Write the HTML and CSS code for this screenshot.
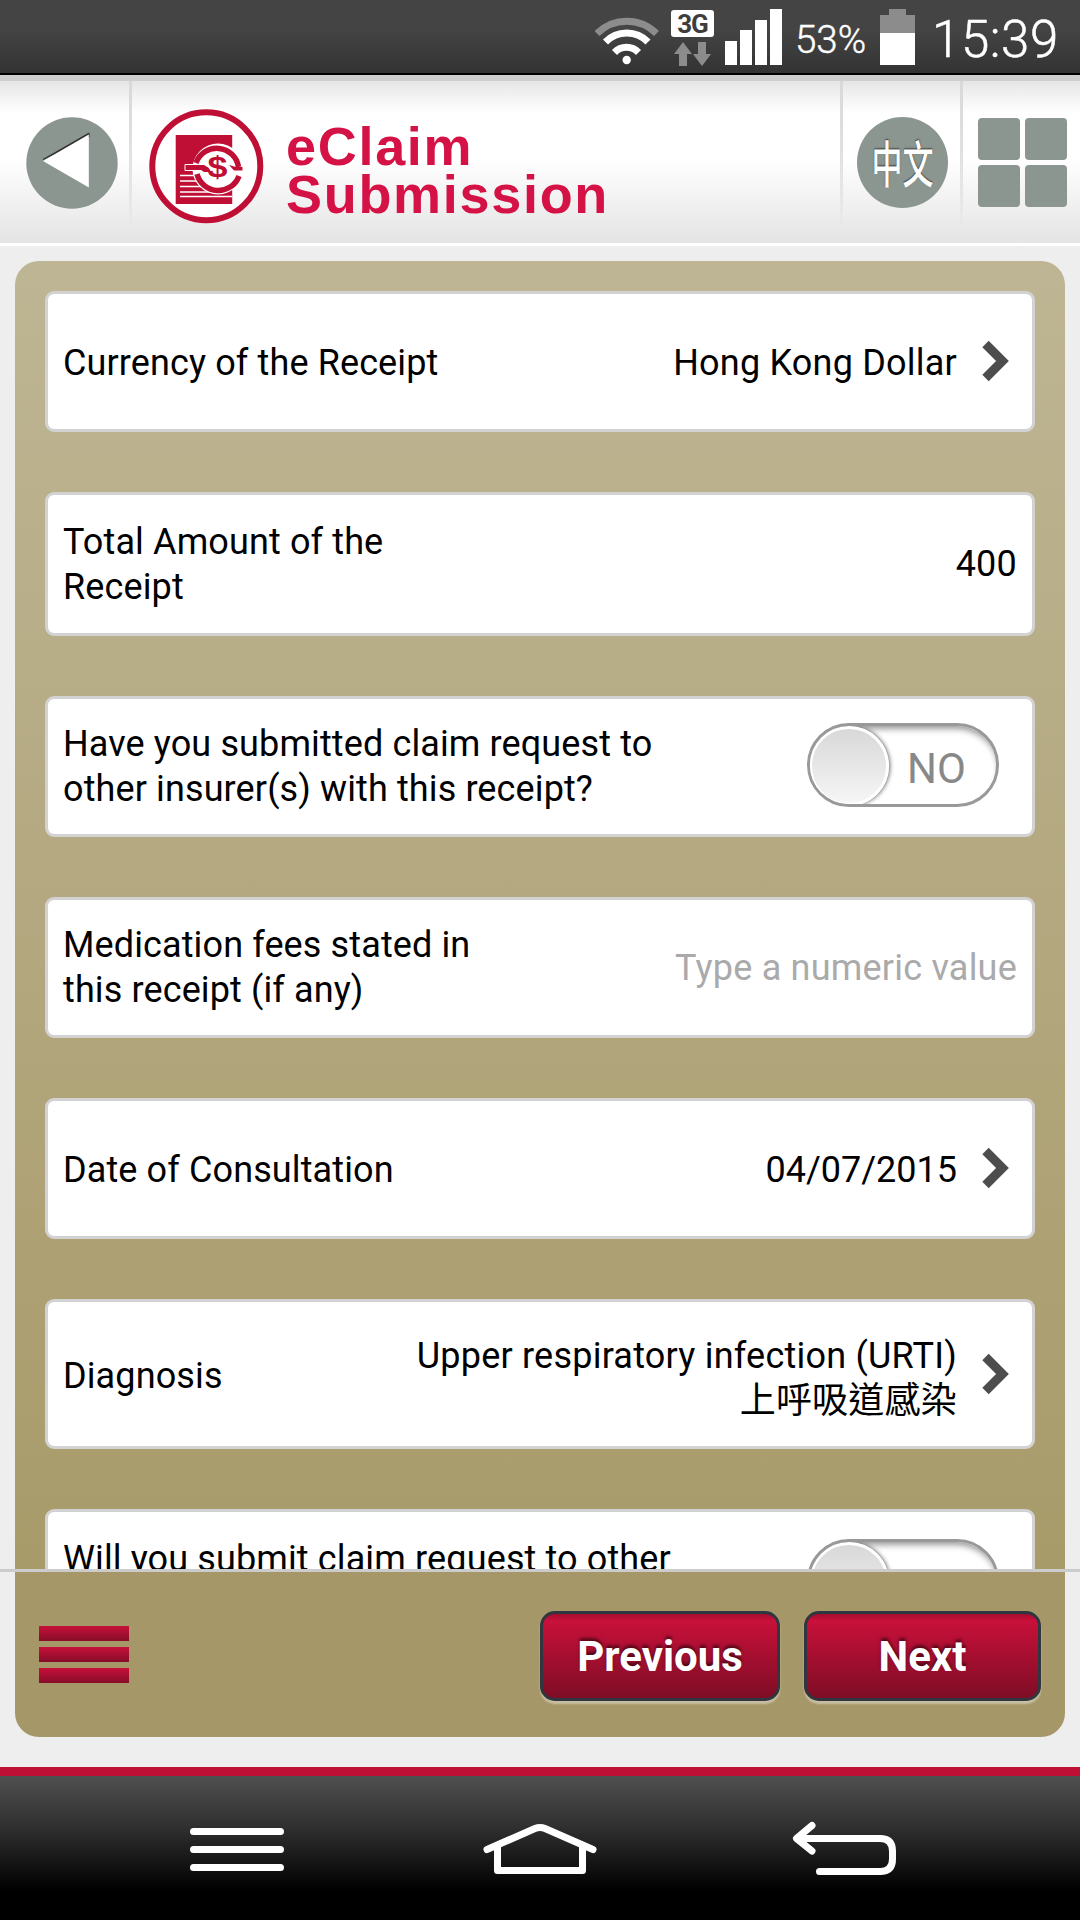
FILE: index.html
```html
<!DOCTYPE html>
<html lang="en">
<head>
    <meta charset="UTF-8">
    <meta name="viewport" content="width=device-width, initial-scale=1.0">
    <title>eClaim Submission</title>
    <link rel="stylesheet" href="styles.css">
</head>
<body>
    <div class="status-bar">
        <svg class="wifi" width="64" height="73" viewBox="595 0 64 73" fill="none" stroke="#fff" stroke-width="7">
            <path d="M597 33.5A42 42 0 0 1 656.500 33.500" stroke="#8c8c8c"/>
            <path d="M605.500 42A29.500 29.500 0 0 1 648 42"/>
            <path d="M614.500 52.500A16.500 16.500 0 0 1 638.500 52.500"/>
            <circle cx="626.700" cy="60" r="4.200" fill="#fff" stroke="none"/>
        </svg>
        <div class="network">
            <span class="network-type">3G</span>
            <svg width="43" height="24" viewBox="671 42 43 24" fill="#8c8c8c">
                <path d="M683 42l9 12h-5v12h-8v-12h-5zM698 42h8v12h5l-9 12-9-12h5z"/>
            </svg>
        </div>
        <svg class="signal" width="57" height="73" viewBox="725 0 57 73" fill="#fff">
            <path d="M725 41h12v24h-12zM740 30h12v35h-12zM755 20h12v45h-12zM770 9h12v56h-12z"/>
        </svg>
        <span class="percent">53%</span>
        <svg class="battery" width="35" height="73" viewBox="880 0 35 73">
            <path d="M889 9h17v6h9v18h-35V15h9z" fill="#8c8c8c"/>
            <path d="M880 33h35v32h-35z" fill="#fff"/>
        </svg>
        <span class="clock">15:39</span>
    </div>

    <header>
        <a class="back">
            <svg width="92" height="92" viewBox="0 0 92 92">
                <circle cx="46" cy="46" r="45.700" fill="#8b9691"/>
                <path d="M17 42.500L63 16v4z" fill="#333" stroke="#333"/>
                <path d="M17 44L62.800 17.500v53z" fill="#fff"/>
            </svg>
        </a>
        <div class="brand">
            <svg class="logo" width="116" height="116" viewBox="148 108 116 116">
                <circle cx="206.300" cy="166.200" r="54" fill="#fff" stroke="#bf0f35" stroke-width="6"/>
                <path d="M175.700 135h56.500v69h-56.500z" fill="#bf0f35"/>
                <path d="M180 175.500h20M180 181h22M180 186.500h25M180 192h30M180 196.500h52" stroke="#fff" stroke-width="1.700"/>
                <circle cx="218" cy="169" r="25.500" fill="#fff"/>
                <path d="M196 163A22 22 0 0 1 238.500 167M239 176A22 22 0 0 1 197 174" fill="none" stroke="#bf0f35" stroke-width="5.500"/>
                <path d="M185 164.500h19l5 3 3 5h-8l-3-2h-16z" fill="#bf0f35" stroke="#fff"/>
                <path d="M229 165l7 2h6.500v3.500h-8.500z" fill="#bf0f35"/>
                <text x="207.500" y="177" textLength="20" lengthAdjust="spacingAndGlyphs" class="logo-dollar">$</text>
            </svg>
            <h1>eClaim<br>Submission</h1>
        </div>
        <a class="lang"><span class="disc"><span class="lang-name">中文</span></span></a>
        <a class="apps">
            <i></i><i></i><i></i><i></i>
        </a>
    </header>

    <main>
        <form class="panel">
            <div class="field pick">
                <label>Currency of the Receipt</label>
                <span class="value">Hong Kong Dollar</span>
                <svg class="chevron" width="28" height="42" viewBox="0 0 28 42"><path d="M3.500 4l17 17-17 17" /></svg>
            </div>
            <div class="field tall">
                <label>Total Amount of the<br>Receipt</label>
                <span class="value">400</span>
            </div>
            <div class="field">
                <label>Have you submitted claim request to<br>other insurer(s) with this receipt?</label>
                <div class="toggle"><span class="knob"></span><span class="state">NO</span></div>
            </div>
            <div class="field">
                <label>Medication fees stated in<br>this receipt (if any)</label>
                <span class="value placeholder">Type a numeric value</span>
            </div>
            <div class="field pick">
                <label>Date of Consultation</label>
                <span class="value date">04/07/2015</span>
                <svg class="chevron" width="28" height="42" viewBox="0 0 28 42"><path d="M3.500 4l17 17-17 17" /></svg>
            </div>
            <div class="field diagnosis">
                <label>Diagnosis</label>
                <span class="value">Upper respiratory infection (URTI)<br>上呼吸道感染</span>
                <svg class="chevron" width="28" height="42" viewBox="0 0 28 42"><path d="M3.500 4l17 17-17 17" /></svg>
            </div>
            <div class="field tall">
                <label>Will you submit claim request to other<br>insurer(s) later?</label>
                <div class="toggle"><span class="knob"></span><span class="state">NO</span></div>
            </div>
        </form>
    </main>

    <footer>
        <div class="actions">
            <div class="menu"><i></i><i></i><i></i></div>
            <button type="button" class="previous">Previous</button>
            <button type="button" class="next">Next</button>
        </div>
    </footer>

    <nav>
        <svg width="1080" height="144" viewBox="0 1776 1080 144">
            <path d="M193.500 1831.500h87M193.500 1849.500h87M193.500 1867.500h87"/>
            <path d="M487 1849.500L535 1828.500Q540 1826.500 545 1828.500L593 1849.500M497.500 1846v24.500h85V1846"/>
            <path d="M812 1825.500L796.500 1838.500 812 1851M797 1838.500h83q12.500 0 12.500 12.500v8q0 12.500-12.500 12.500h-60.500"/>
        </svg>
    </nav>
</body>
</html>
```
FILE: styles.css
```css
* { box-sizing: border-box; }
body { margin: 0; width: 1080px; height: 1920px; overflow: hidden; background: #eee; font-family: Roboto, "Noto Sans CJK TC", sans-serif; color: #000; }

/* status bar */
.status-bar { display: flex; justify-content: flex-end; height: 75px; padding-right: 22px; border-bottom: 2px solid #000; background: linear-gradient(#444 40%, #333); color: #fff; font-weight: 300; line-height: 73px; }
.network { width: 43px; margin: 10px 11px 0 12px; }
.network-type { display: block; height: 27px; margin-bottom: 5px; border-radius: 3px; background: #fff; color: #3d3d3d; font-size: 26px; font-weight: 700; line-height: 28px; letter-spacing: -1px; text-align: center; }
.network svg { display: block; }
.percent { width: 72px; margin: 3px 13px 0 13px; font-size: 38.500px; white-space: nowrap; -webkit-text-stroke: .4px #fff; }
.clock { width: 126px; margin: 3px 0 0 17px; font-size: 51px; letter-spacing: .6px; white-space: nowrap; -webkit-text-stroke: .5px #fff; }

/* header */
header { display: flex; height: 171px; border-top: 6px solid #cecece; border-bottom: 3px solid #fff; background: linear-gradient(#e6e6e6, #fff 20%, #fff 48%, #e5e4e4); }
.back { width: 132px; padding: 36px 0 0 26px; }
.back, .brand, .lang { border-right: 3px solid; border-image: linear-gradient(#d8d8d8, #e8e8e8 80%, transparent 96%) 1; }
.brand { display: flex; width: 711px; padding: 27px 0 0 16px; }
.logo-dollar { font: bold 29px "Liberation Sans", sans-serif; fill: #bf0f35; }
h1 { margin: 14px 0 0 22px; font: bold 54px/48px "Liberation Sans", Arial, sans-serif; letter-spacing: 1.700px; color: #d51245; }
.lang { width: 120px; padding: 36px 0 0 14px; }
.disc { display: block; width: 91px; height: 91px; border-radius: 50%; background: #8b9691; }
.lang-name { display: block; color: #fff; font: 500 31px/89px "Noto Sans CJK TC", sans-serif; text-align: center; text-shadow: 0 -1px 1px #333; transform: scaleY(1.6); }
.apps { display: grid; grid-template-columns: 42px 42px; grid-auto-rows: 42px; gap: 5px; padding: 37px 0 0 15px; }
.apps i { border-radius: 4px; background: #8b9691; }

/* claim form */
main { height: 1323px; padding: 15px 15px 0; overflow: hidden; }
.panel { display: flex; flex-direction: column; gap: 60px; height: 1308px; padding: 30px; overflow: hidden; border-radius: 24px 24px 0 0; background: linear-gradient(#beb594, #a89b6a); }
.field { display: flex; flex: none; align-items: center; height: 141px; padding: 1px 15px 0; border: 3px solid #d2d2d2; border-radius: 9px; background: #fff; font-size: 36px; line-height: 45px; letter-spacing: .12px; white-space: nowrap; }
.field.pick { padding-top: 3px; }
.field.tall { height: 144px; }
.field.diagnosis { height: 150px; padding-top: 5px; }
.value { margin-left: auto; letter-spacing: .22px; text-align: right; }
.date { letter-spacing: 0; }
.diagnosis .value { padding-top: 4px; }
.placeholder { padding-top: 1px; color: #aaa; }
.chevron { margin: -5px 7px 0 25px; fill: none; stroke: #4d4d4d; stroke-width: 9px; }
.toggle { position: relative; width: 192px; height: 84px; margin: -5px 18px 0 auto; border: 3px solid #999; border-radius: 42px; box-shadow: inset 0 6px 6px -3px #999; overflow: hidden; }
.tall .toggle { margin-top: -1px; }
.knob { position: absolute; left: -1px; top: 0; width: 80px; height: 80px; border: 3px solid #fff; border-radius: 50%; background: linear-gradient(#d8d8d8, #f6f6f6); box-shadow: 1px 0 4px #666; }
.state { position: absolute; left: 97px; top: 20px; color: #888; font-size: 42px; }

/* bottom actions */
footer { height: 207px; padding: 0 15px 30px; border-top: 3px solid #ccc; border-bottom: 9px solid #bf0f35; }
.actions { display: flex; height: 165px; padding: 39px 24px 0; border-radius: 0 0 24px 24px; background: #a59768; }
.menu { display: grid; grid-auto-rows: 15px; gap: 6px; width: 90px; height: 57px; margin: 15px auto 0 0; }
.menu i { background: linear-gradient(#c8103a, #850d28); }
button { height: 90px; padding: 0; border: 3px solid #303640; border-radius: 15px; background: linear-gradient(#a50d30, #c8103a 8%, #7e0d25); box-shadow: 0 3px 2px rgba(255, 255, 255, .4); color: #fff; font: bold 42px Roboto, sans-serif; text-shadow: 0 -3px 3px rgba(0, 0, 0, .5); }
.previous { width: 240px; margin-right: 24px; }
.next { width: 237px; }

/* device buttons */
nav { height: 144px; background: linear-gradient(#505050, #333 32%, #000 80%); }
nav svg { display: block; fill: none; stroke: #fff; stroke-width: 7px; stroke-linecap: round; stroke-linejoin: round; }
```
